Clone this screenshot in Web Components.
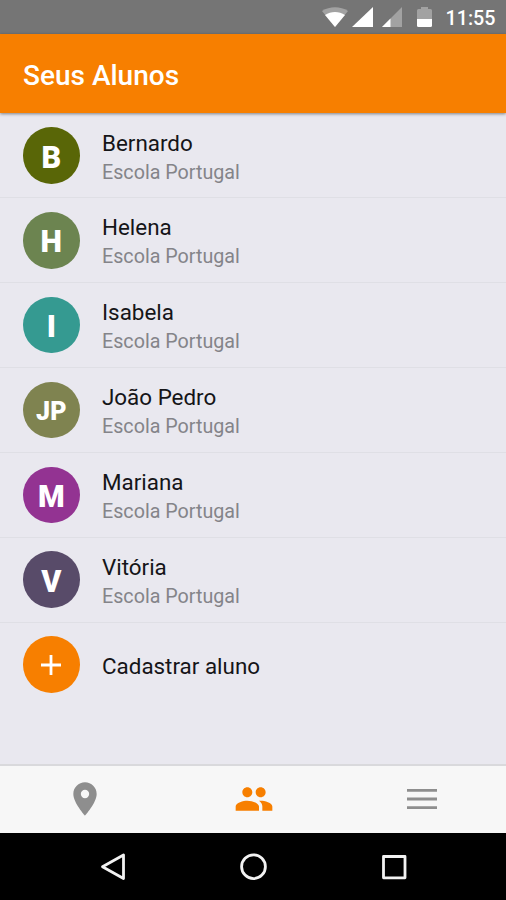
<!DOCTYPE html>
<html lang="pt-BR">
<head>
<meta charset="utf-8">
<title>Seus Alunos</title>
<style>
  body {
    margin: 0;
    font-family: Roboto, "Noto Sans", sans-serif;
  }
</style>
</head>
<body>
<phone-screen>
  <status-bar slot="status" time="11:55"></status-bar>
  <app-header slot="header">Seus Alunos</app-header>
  <student-item initials="B" color="#596607" school="Escola Portugal">Bernardo</student-item>
  <student-item initials="H" color="#6c8450" school="Escola Portugal">Helena</student-item>
  <student-item initials="I" color="#359a91" school="Escola Portugal">Isabela</student-item>
  <student-item initials="JP" color="#7f8350" school="Escola Portugal">João Pedro</student-item>
  <student-item initials="M" color="#933392" school="Escola Portugal">Mariana</student-item>
  <student-item initials="V" color="#584b69" school="Escola Portugal">Vitória</student-item>
  <student-item color="#f77f00">Cadastrar aluno</student-item>
  <tab-bar slot="tabs"></tab-bar>
  <system-nav slot="nav"></system-nav>
</phone-screen>

<script>
class PhoneScreen extends HTMLElement {
  constructor() {
    super();
    this.attachShadow({ mode: "open" });
    this.shadowRoot.innerHTML = `
      <style>
        :host {
          display: flex;
          flex-direction: column;
          width: 506px;
          height: 900px;
          overflow: hidden;
          background: #e9e8ef;
        }
        main {
          flex: 1;
          min-height: 0;
          padding-top: .6px;
          overflow: hidden;
        }
      </style>
      <slot name="status"></slot>
      <slot name="header"></slot>
      <main><slot></slot></main>
      <slot name="tabs"></slot>
      <slot name="nav"></slot>
    `;
  }
}

class StatusBar extends HTMLElement {
  connectedCallback() {
    this.attachShadow({ mode: "open" });
    this.shadowRoot.innerHTML = `
      <style>
        :host {
          display: flex;
          flex: none;
          align-items: center;
          justify-content: flex-end;
          height: 34px;
          padding-right: 10.500px;
          box-sizing: border-box;
          background: #757575;
          color: #fff;
          font-size: 19.700px;
          font-weight: 500;
        }
        svg { display: block; fill: #fff; }
        .dim { opacity: .33; }
        .wifi { margin-right: 4px; }
        .signal { margin-right: 9px; }
        .signal.weak { margin-right: 15px; }
        .battery { margin-right: 13.500px; }
        span { line-height: 34px; padding-top: 3px; }
      </style>
      <svg class="wifi" width="26" height="20" viewBox="0 0 26 20">
        <path class="dim" d="M13 20 0 4C7.500-1 18.500-1 26 4z"/>
        <path d="M13 20 3 8C9 4 17 4 23 8z"/>
      </svg>
      <svg class="signal" width="21" height="20" viewBox="0 0 21 20"><path d="M0 20 21 0V20z"/></svg>
      <svg class="signal weak" width="20" height="20" viewBox="0 0 20 20">
        <path class="dim" d="M0 20 20 0V20z"/>
        <path d="M0 20 8.500 11.500V20z"/>
      </svg>
      <svg class="battery" width="15" height="20" viewBox="0 0 15 20">
        <path class="dim" d="M0 3.500Q0 2 1.500 2H4V0H11V2H13.500Q15 2 15 3.500V12H0z"/>
        <path d="M0 12H15V18.500Q15 20 13.500 20H1.500Q0 20 0 18.500z"/>
      </svg>
      <span>${this.getAttribute("time")}</span>
    `;
  }
}

class AppHeader extends HTMLElement {
  constructor() {
    super();
    this.attachShadow({ mode: "open" });
    this.shadowRoot.innerHTML = `
      <style>
        :host {
          display: flex;
          flex: none;
          align-items: center;
          height: 79px;
          padding: 3px 23px 0;
          box-sizing: border-box;
          background: #f77f00;
          box-shadow: 0 1px 3px rgba(0, 0, 0, .45);
          color: #fff;
          font-size: 28px;
          font-weight: 500;
          z-index: 1;
        }
      </style>
      <slot></slot>
    `;
  }
}

class StudentItem extends HTMLElement {
  connectedCallback() {
    const initials = this.getAttribute("initials");
    const school = this.getAttribute("school");
    const size = initials && initials.length > 1 ? 25 : 30.5;

    this.attachShadow({ mode: "open" });
    this.shadowRoot.innerHTML = `
      <style>
        :host {
          display: flex;
          align-items: center;
          gap: 22.500px;
          height: 84.850px;
          padding-left: 23px;
          box-sizing: border-box;
          border-bottom: 1px solid #dfdfe5;
        }
        :host(:last-of-type) { border-bottom-color: transparent; }
        .avatar {
          display: flex;
          align-items: center;
          justify-content: center;
          width: 56.500px;
          height: 56.500px;
          padding-top: 3px;
          box-sizing: border-box;
          border-radius: 50%;
          background: ${this.getAttribute("color")};
          color: #fff;
          font-size: ${size}px;
          font-weight: 900;
        }
        .avatar.add { padding: 0; }
        .name {
          color: #151518;
          font-size: 22.400px;
          line-height: 28px;
        }
        .school {
          color: #848489;
          font-size: 19.700px;
          line-height: 29px;
          padding-top: 1px;
        }
        .text { padding-top: 4px; }
        .add + .text { padding-top: 2px; }
      </style>
      <div class="avatar ${initials ? "" : "add"}">${initials || `
        <svg width="20" height="20" viewBox="0 0 20 20">
          <path d="M10 0V20M0 10H20" stroke="#fff" stroke-width="2.800"/>
        </svg>`}</div>
      <div class="text">
        <div class="name"><slot></slot></div>
        ${school ? `<div class="school">${school}</div>` : ""}
      </div>
    `;
  }
}

class TabBar extends HTMLElement {
  constructor() {
    super();
    this.attachShadow({ mode: "open" });
    this.shadowRoot.innerHTML = `
      <style>
        :host {
          display: grid;
          grid-template-columns: repeat(3, 1fr);
          flex: none;
          place-items: center;
          height: 69px;
          padding: 0 0 2px 1px;
          box-sizing: border-box;
          border-top: 2px solid #d9d9dc;
          background: #f7f7f7;
        }
        svg { display: block; fill: #8e8e8e; }
        .active { fill: #f77f00; margin-left: 1px; }
      </style>
      <svg width="40" height="40" viewBox="0 0 24 24">
        <path d="M12 2C8.130 2 5 5.130 5 9c0 5.250 7 13 7 13s7-7.750 7-13c0-3.870-3.130-7-7-7zm0 9.500a2.500 2.500 0 0 1 0-5 2.500 2.500 0 0 1 0 5z"/>
      </svg>
      <svg class="active" width="40" height="40" viewBox="0 0 24 24">
        <path d="M16 11c1.660 0 2.990-1.340 2.990-3S17.660 5 16 5s-3 1.340-3 3 1.340 3 3 3zm-8 0c1.660 0 2.990-1.340 2.990-3S9.660 5 8 5 5 6.340 5 8s1.340 3 3 3zm0 2c-2.330 0-7 1.170-7 3.500V19h14v-2.500c0-2.330-4.670-3.500-7-3.500zm8 0c-.290 0-.620.020-.970.050 1.160.840 1.970 1.970 1.970 3.450V19h6v-2.500c0-2.330-4.670-3.500-7-3.500z"/>
      </svg>
      <svg width="40" height="40" viewBox="0 0 24 24">
        <path d="M3 18h18v-1.700H3V18zm0-5.150h18v-1.700H3v1.700zM3 6v1.700h18V6H3z"/>
      </svg>
    `;
  }
}

class SystemNav extends HTMLElement {
  constructor() {
    super();
    this.attachShadow({ mode: "open" });
    this.shadowRoot.innerHTML = `
      <style>
        :host {
          display: flex;
          flex: none;
          align-items: center;
          justify-content: center;
          gap: 112px;
          height: 67px;
          background: #000;
        }
        svg {
          display: block;
          fill: none;
          stroke: #f2f2f2;
          stroke-width: 2.800;
          stroke-linejoin: round;
        }
      </style>
      <svg width="28" height="28" viewBox="0 0 28 28"><path d="M24.500 2V25.500L3.500 13.800z"/></svg>
      <svg width="28" height="28" viewBox="0 0 28 28"><circle cx="14.500" cy="13.700" r="11.900"/></svg>
      <svg width="28" height="28" viewBox="0 0 28 28"><path d="M4.500 3.500H26V24.800H4.500z"/></svg>
    `;
  }
}

customElements.define("phone-screen", PhoneScreen);
customElements.define("status-bar", StatusBar);
customElements.define("app-header", AppHeader);
customElements.define("student-item", StudentItem);
customElements.define("tab-bar", TabBar);
customElements.define("system-nav", SystemNav);
</script>
</body>
</html>
